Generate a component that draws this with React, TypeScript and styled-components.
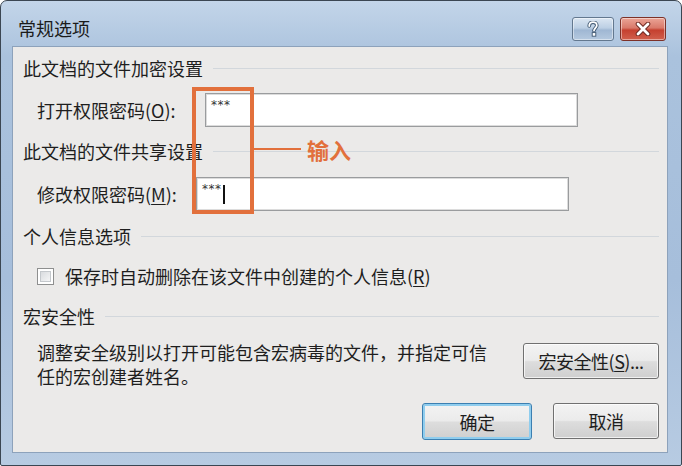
import React from 'react'
import styled, { createGlobalStyle } from 'styled-components'

const GlobalStyle = createGlobalStyle`
  html, body {
    margin: 0;
    padding: 0;
    background: #ffffff;
  }
  body {
    font-family: 'Noto Sans CJK SC', 'Noto Sans', sans-serif;
  }
`

const orange = '#e2703c'

const Window = styled.div`
  position: relative;
  width: 682px;
  height: 466px;
  box-sizing: border-box;
  display: flex;
  flex-direction: column;
  border: 1px solid #3b4652;
  border-radius: 7px 7px 2px 2px;
  background: linear-gradient(180deg, #c3d5e9 0%, #aac2dd 12%, #a6bedb 60%, #b7cbe2 100%);
  overflow: hidden;
`

const TitleBar = styled.div`
  height: 45px;
  flex-shrink: 0;
  display: flex;
  align-items: center;
  padding: 0 15px 0 17px;
`

const Title = styled.div`
  flex-grow: 1;
  font-size: 18px;
  color: #1b1b1b;
  padding-top: 8px;
`

const CaptionButtons = styled.div`
  display: flex;
  gap: 6px;
  margin-top: 10px;
`

const CaptionButton = styled.div<{ $close?: boolean }>`
  width: ${props => (props.$close ? 46 : 42)}px;
  height: 24px;
  box-sizing: border-box;
  display: flex;
  align-items: center;
  justify-content: center;
  border-radius: 3px;
  border: 1px solid ${props => (props.$close ? '#7d3128' : '#63788f')};
  background: ${props =>
    props.$close
      ? 'linear-gradient(180deg, #eba597 0%, #d9796a 45%, #c5402f 55%, #d1604d 100%)'
      : 'linear-gradient(180deg, #dbe6f2 0%, #bccfe4 45%, #9fb7d3 55%, #b5c9df 100%)'};
  box-shadow: inset 0 0 0 1px rgba(255, 255, 255, 0.45);
`

const Client = styled.div`
  flex-grow: 1;
  margin: 0 13px 12px 11px;
  background: #ebeae9;
  border: 1px solid #8da2bb;
  padding: 9px 8px 11px 10px;
  display: flex;
  flex-direction: column;
  color: #1e1e1e;
  font-size: 18px;
`

const Heading = styled.div<{ $top: number }>`
  height: 24px;
  line-height: 24px;
  margin-top: ${props => props.$top}px;
  display: flex;
  align-items: center;
  white-space: nowrap;

  &::after {
    content: '';
    flex-grow: 1;
    height: 1px;
    margin-left: 10px;
    background: #d2d7dc;
  }
`

const FieldRow = styled.div<{ $top: number }>`
  display: flex;
  align-items: center;
  margin-top: ${props => props.$top}px;
  padding-left: 14px;
`

const Label = styled.div<{ $width: number }>`
  width: ${props => props.$width}px;
  flex-shrink: 0;
  white-space: nowrap;
`

const Key = styled.span`
  text-decoration: underline;
  text-underline-offset: 2px;
`

const Field = styled.div`
  width: 373px;
  height: 34px;
  box-sizing: border-box;
  background: #ffffff;
  border: 1px solid #9a9c9e;
  box-shadow: inset 0 0 0 1px #dcdcdc;
  padding: 3px 5px;
  display: flex;
  align-items: flex-start;
  font-family: 'DejaVu Sans', sans-serif;
  font-size: 12px;
  line-height: 16px;
  color: #333;
  letter-spacing: 0.5px;
`

const Caret = styled.span`
  display: inline-block;
  width: 0;
  height: 19px;
  border-left: 2px solid #111;
  margin-left: 1px;
  margin-top: 4px;
`

const CheckRow = styled.div`
  display: flex;
  align-items: center;
  margin-top: 16px;
  padding-left: 14px;
  height: 24px;
  white-space: nowrap;
`

const CheckBox = styled.div`
  width: 17px;
  height: 17px;
  box-sizing: border-box;
  border: 1px solid #8e8f8f;
  background: #ffffff;
  padding: 2px;
  margin-right: 11px;

  &::before {
    content: '';
    display: block;
    width: 100%;
    height: 100%;
    box-sizing: border-box;
    border: 1px solid #c4c8cc;
    background: linear-gradient(135deg, #d9dcdf 0%, #f4f5f6 100%);
  }
`

const MacroRow = styled.div`
  display: flex;
  align-items: flex-start;
  justify-content: space-between;
  margin-top: 12px;
  padding-left: 14px;
`

const Description = styled.div`
  line-height: 24px;
  white-space: nowrap;
`

const Button = styled.div<{ $width: number; $default?: boolean }>`
  width: ${props => props.$width}px;
  height: ${props => (props.$default ? 37 : 36)}px;
  box-sizing: border-box;
  display: flex;
  align-items: center;
  justify-content: center;
  border-radius: 3px;
  border: 1px solid ${props => (props.$default ? '#3c7fb1' : '#707070')};
  background: linear-gradient(180deg, #f3f3f3 0%, #ebebeb 48%, #dddddd 52%, #cfcfcf 100%);
  box-shadow: ${props =>
    props.$default ? 'inset 0 0 0 2px #8fcdee' : 'inset 0 0 0 1px rgba(255, 255, 255, 0.7)'};
  font-size: 18px;
  letter-spacing: -0.5px;
  white-space: nowrap;
`

const MacroButton = styled(Button)`
  margin-top: 3px;
`

const Footer = styled.div`
  display: flex;
  justify-content: flex-end;
  gap: 21px;
  margin-top: 15px;
`

const MarkBox = styled.div`
  position: absolute;
  left: 191px;
  top: 86px;
  width: 62px;
  height: 127px;
  box-sizing: border-box;
  border: 4px solid ${orange};
`

const Callout = styled.div`
  position: absolute;
  left: 253px;
  top: 134px;
  display: flex;
  align-items: center;
  gap: 6px;
  color: ${orange};
  font-size: 22px;
  font-weight: 700;
  line-height: 28px;

  &::before {
    content: '';
    width: 47px;
    height: 2px;
    background: ${orange};
  }
`

export default function App() {
  return (
    <>
      <GlobalStyle />
      <Window>
        <TitleBar>
          <Title>常规选项</Title>
          <CaptionButtons>
            <CaptionButton>
              <svg width='12' height='16' viewBox='0 0 12 16'>
                <path
                  d='M2.2 5 C2.2 2.2 4 1.2 6 1.2 C8.2 1.2 9.8 2.5 9.8 4.5 C9.8 6.6 7.2 7.2 7 9.6'
                  fill='none'
                  stroke='#3e5670'
                  strokeWidth='3.6'
                  strokeLinecap='round'
                />
                <path
                  d='M2.2 5 C2.2 2.2 4 1.2 6 1.2 C8.2 1.2 9.8 2.5 9.8 4.5 C9.8 6.6 7.2 7.2 7 9.6'
                  fill='none'
                  stroke='#ffffff'
                  strokeWidth='1.8'
                  strokeLinecap='round'
                />
                <rect x='5.2' y='11.6' width='3.6' height='3.6' fill='#ffffff' stroke='#3e5670' strokeWidth='0.9' />
              </svg>
            </CaptionButton>
            <CaptionButton $close>
              <svg width='16' height='14' viewBox='0 0 16 14'>
                <path d='M3 2 L13 12 M13 2 L3 12' stroke='#6e2a22' strokeWidth='4.6' strokeLinecap='round' />
                <path d='M3 2 L13 12 M13 2 L3 12' stroke='#ffffff' strokeWidth='2.8' strokeLinecap='round' />
              </svg>
            </CaptionButton>
          </CaptionButtons>
        </TitleBar>

        <Client>
          <Heading $top={0}>此文档的文件加密设置</Heading>
          <FieldRow $top={13}>
            <Label $width={168}>
              打开权限密码(<Key>O</Key>):
            </Label>
            <Field>***</Field>
          </FieldRow>

          <Heading $top={12}>此文档的文件共享设置</Heading>
          <FieldRow $top={14}>
            <Label $width={159}>
              修改权限密码(<Key>M</Key>):
            </Label>
            <Field>
              ***
              <Caret />
            </Field>
          </FieldRow>

          <Heading $top={13}>个人信息选项</Heading>
          <CheckRow>
            <CheckBox />
            保存时自动删除在该文件中创建的个人信息(<Key>R</Key>)
          </CheckRow>

          <Heading $top={16}>宏安全性</Heading>
          <MacroRow>
            <Description>
              调整安全级别以打开可能包含宏病毒的文件，并指定可信
              <br />
              任的宏创建者姓名。
            </Description>
            <MacroButton $width={136}>
              宏安全性(<Key>S</Key>)...
            </MacroButton>
          </MacroRow>

          <Footer>
            <Button $width={110} $default>
              确定
            </Button>
            <Button $width={106}>取消</Button>
          </Footer>
        </Client>

        <MarkBox />
        <Callout>输入</Callout>
      </Window>
    </>
  )
}
